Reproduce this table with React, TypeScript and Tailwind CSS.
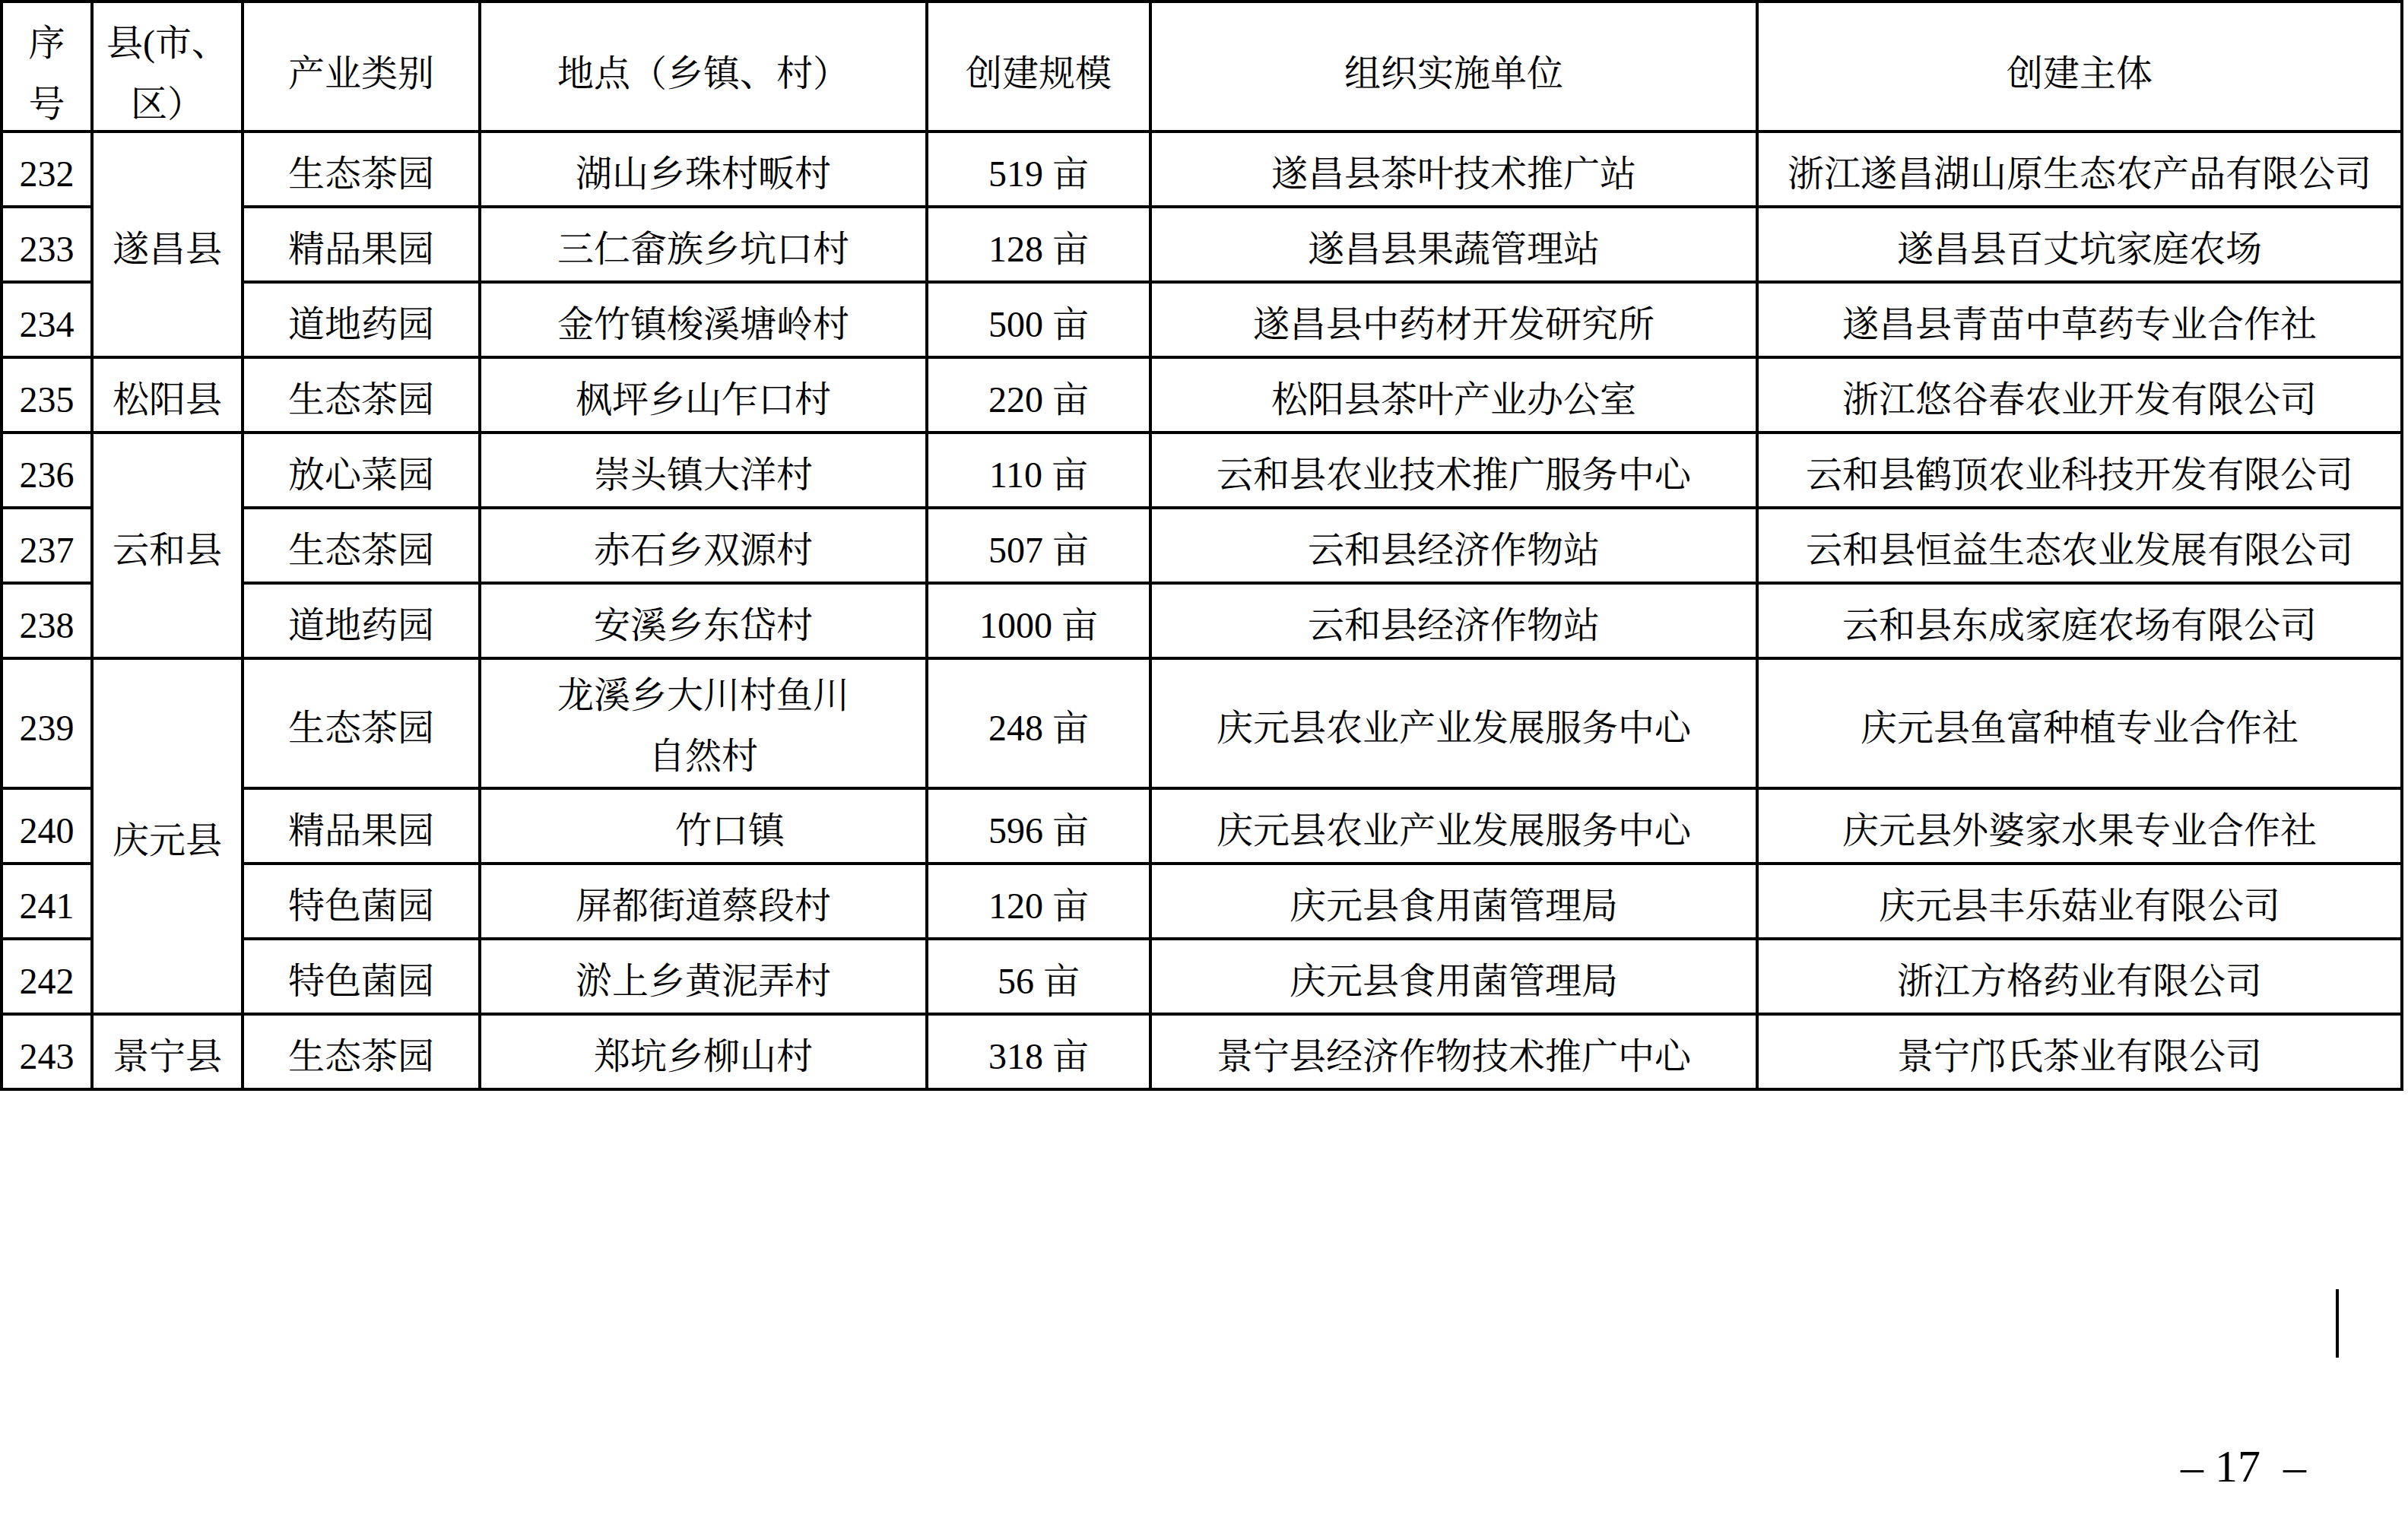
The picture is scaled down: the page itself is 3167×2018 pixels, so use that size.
const rows = [
  { no: "232", county: "遂昌县", span: 3, type: "生态茶园", place: "湖山乡珠村畈村", size: "519", org: "遂昌县茶叶技术推广站", owner: "浙江遂昌湖山原生态农产品有限公司" },
  { no: "233", type: "精品果园", place: "三仁畲族乡坑口村", size: "128", org: "遂昌县果蔬管理站", owner: "遂昌县百丈坑家庭农场" },
  { no: "234", type: "道地药园", place: "金竹镇梭溪塘岭村", size: "500", org: "遂昌县中药材开发研究所", owner: "遂昌县青苗中草药专业合作社" },
  { no: "235", county: "松阳县", span: 1, type: "生态茶园", place: "枫坪乡山乍口村", size: "220", org: "松阳县茶叶产业办公室", owner: "浙江悠谷春农业开发有限公司" },
  { no: "236", county: "云和县", span: 3, type: "放心菜园", place: "崇头镇大洋村", size: "110", org: "云和县农业技术推广服务中心", owner: "云和县鹤顶农业科技开发有限公司" },
  { no: "237", type: "生态茶园", place: "赤石乡双源村", size: "507", org: "云和县经济作物站", owner: "云和县恒益生态农业发展有限公司" },
  { no: "238", type: "道地药园", place: "安溪乡东岱村", size: "1000", org: "云和县经济作物站", owner: "云和县东成家庭农场有限公司" },
  { no: "239", county: "庆元县", span: 4, type: "生态茶园", place: "龙溪乡大川村鱼川|自然村", size: "248", org: "庆元县农业产业发展服务中心", owner: "庆元县鱼富种植专业合作社", tall: true },
  { no: "240", type: "精品果园", place: "竹口镇", size: "596", org: "庆元县农业产业发展服务中心", owner: "庆元县外婆家水果专业合作社", shift: true },
  { no: "241", type: "特色菌园", place: "屏都街道蔡段村", size: "120", org: "庆元县食用菌管理局", owner: "庆元县丰乐菇业有限公司" },
  { no: "242", type: "特色菌园", place: "淤上乡黄泥弄村", size: "56", org: "庆元县食用菌管理局", owner: "浙江方格药业有限公司" },
  { no: "243", county: "景宁县", span: 1, type: "生态茶园", place: "郑坑乡柳山村", size: "318", org: "景宁县经济作物技术推广中心", owner: "景宁邝氏茶业有限公司" },
];

const base = "border-4 border-black text-center align-middle p-0";
const cell = `${base} pt-[12px]`;
const head = `${base} pt-[6px] font-normal`;

function Head({ children }: { children: React.ReactNode }) {
  return (
    <th className={head}>
      <div className="translate-y-[6px]">{children}</div>
    </th>
  );
}

export default function App() {
  return (
    <div className="min-h-screen w-full bg-white text-black font-['Liberation_Serif','Noto_Serif_CJK_SC','Noto_Sans_CJK_SC',serif] text-[48px] leading-[80px]">
      <table className="table-fixed border-collapse w-[3161px]">
        <colgroup>
          <col className="w-[119px]" />
          <col className="w-[198px]" />
          <col className="w-[312px]" />
          <col className="w-[588px]" />
          <col className="w-[294px]" />
          <col className="w-[798px]" />
          <col className="w-[848px]" />
        </colgroup>
        <thead>
          <tr className="h-[171px]">
            <Head>序<br />号</Head>
            <Head>县(市、<br />区）</Head>
            <Head>产业类别</Head>
            <Head>地点（乡镇、村）</Head>
            <Head>创建规模</Head>
            <Head>组织实施单位</Head>
            <Head>创建主体</Head>
          </tr>
        </thead>
        <tbody>
          {rows.map((r) => (
            <tr key={r.no} className={r.tall ? "h-[171px]" : "h-[99px]"}>
              <td className={cell}>{r.no}</td>
              {r.county && (
                <td className={cell} rowSpan={r.span}>
                  {r.county}
                </td>
              )}
              <td className={cell}>{r.type}</td>
              <td className={r.tall ? `${base} pt-[6px]` : r.shift ? `${cell} pl-[70px]` : cell}>
                {r.place.split("|").map((line, i) => (
                  <div key={i}>{line}</div>
                ))}
              </td>
              <td className={cell}>{r.size} 亩</td>
              <td className={cell}>{r.org}</td>
              <td className={cell}>{r.owner}</td>
            </tr>
          ))}
        </tbody>
      </table>

      <div className="flex justify-end pr-[91px] mt-[261px]">
        <div className="w-1 h-[90px] bg-black" />
      </div>
      <div className="flex justify-end pr-[134px] mt-[113px] text-[60px] leading-[60px]">
        <span className="whitespace-pre">– 17  –</span>
      </div>
    </div>
  );
}
